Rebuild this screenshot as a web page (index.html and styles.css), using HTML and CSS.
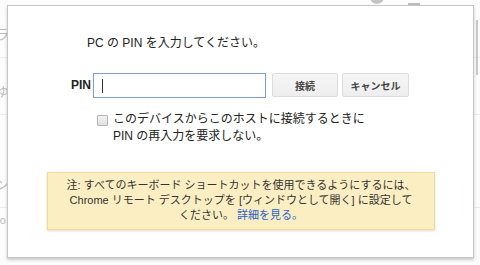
FILE: index.html
```html
<!DOCTYPE html>
<html lang="ja">
<head>
<meta charset="utf-8">
<link rel="stylesheet" href="styles.css">
</head>
<body>
<div class="page">
  <div class="bg">
    <div class="bg-row bg-r1">ラ</div>
    <div class="bg-row bg-r2">ゆ</div>
    <div class="bg-row bg-r3">ン</div>
    <div class="bg-row bg-r4">ro</div>
  </div>
  <span class="bg-dot"></span>
  <span class="bg-dash"></span>
  <span class="bg-scroll"></span>

  <div class="dialog">
    <div class="title">PC の PIN を入力してください。</div>
    <div class="pin-row">
      <span class="pin-label">PIN</span>
      <div class="pin-input"><span class="caret"></span></div>
      <button class="btn btn-connect">接続</button>
      <button class="btn btn-cancel">キャンセル</button>
    </div>
    <div class="check-row">
      <span class="checkbox"></span>
      <div class="check-text">このデバイスからこのホストに接続するときに<br>PIN の再入力を要求しない。</div>
    </div>
    <div class="note">注: すべてのキーボード ショートカットを使用できるようにするには、<br>Chrome リモート デスクトップを [ウィンドウとして開く] に設定して<br>ください。 <a class="note-link" href="#">詳細を見る。</a></div>
  </div>
</div>
</body>
</html>
```
FILE: styles.css
```css
html, body {
  margin: 0;
  padding: 0;
  background: #ffffff;
}
body {
  font-family: "Liberation Sans", "Noto Sans CJK JP", sans-serif;
  color: #222;
}
.page {
  position: relative;
  width: 480px;
  height: 265px;
  overflow: hidden;
  background: #fcfcfc;
}
.bg {
  display: flex;
  flex-direction: column;
}
.bg-row {
  font-size: 13px;
  color: #bdbdbd;
  height: 44px;
  line-height: 44px;
  border-bottom: 1px solid #ededed;
  text-indent: -4px;
}
.bg-r1 { margin-top: 13px; }
.bg-r2 { margin-top: 12px; }
.bg-r3 { margin-top: 48px; }
.bg-r4 { margin-top: -10px; font-size: 11px; border-bottom: none; }
.bg-dot {
  position: absolute;
  left: 370px;
  top: -10px;
  width: 14px;
  height: 14px;
  border-radius: 50%;
  background: #c4c4c4;
}
.bg-dash {
  position: absolute;
  left: 408px;
  top: 3px;
  width: 12px;
  height: 2px;
  background: #bbb;
}
.bg-scroll {
  position: absolute;
  left: 476px;
  top: 20px;
  width: 2px;
  height: 55px;
  background: #c8c8c8;
}
.dialog {
  position: absolute;
  left: 7px;
  top: 5px;
  width: 467px;
  height: 253px;
  box-sizing: border-box;
  background: #fff;
  border: 1px solid #c6c6c6;
  box-shadow: 0 2px 3px rgba(0, 0, 0, 0.2);
  padding-top: 29px;
}
.title {
  margin-left: 79px;
  font-size: 12px;
  line-height: 16px;
  color: #222;
}
.pin-row {
  display: flex;
  align-items: flex-start;
  margin-top: 22px;
  padding-left: 63px;
}
.pin-label {
  font-weight: bold;
  font-size: 12px;
  line-height: 25px;
  color: #222;
  margin-right: 2px;
}
.pin-input {
  width: 173px;
  height: 25px;
  box-sizing: border-box;
  border: 1px solid #7f9fd6;
  background: #fff;
  display: flex;
  align-items: center;
  padding-left: 8px;
}
.caret {
  display: block;
  width: 1px;
  height: 14px;
  background: #333;
}
.btn {
  height: 24px;
  box-sizing: border-box;
  border: 1px solid #dcdcdc;
  border-radius: 2px;
  background: linear-gradient(#f6f6f6, #eeeeee);
  font-family: "Liberation Sans", "Noto Sans CJK JP", sans-serif;
  font-weight: bold;
  font-size: 10px;
  color: #444;
  padding: 0;
  margin: 0;
}
.btn-connect {
  width: 66px;
  margin-left: 6px;
}
.btn-cancel {
  width: 67px;
  margin-left: 4px;
}
.check-row {
  display: flex;
  align-items: flex-start;
  margin-top: 13px;
  padding-left: 89px;
}
.checkbox {
  width: 9px;
  height: 9px;
  margin-top: 4px;
  border: 1px solid #b5b5b5;
  border-radius: 1px;
  background: linear-gradient(#f2f2f2, #e2e2e2);
  margin-right: 5px;
  flex: none;
}
.check-text {
  font-size: 12px;
  line-height: 17px;
  color: #222;
}
.note {
  margin-top: 27px;
  margin-left: 39px;
  width: 388px;
  height: 58px;
  box-sizing: border-box;
  padding-top: 5px;
  background: #fbeec3;
  border: 1px solid #efdc9c;
  box-shadow: 0 1px 2px rgba(180, 150, 60, 0.35);
  text-align: center;
  font-size: 11px;
  line-height: 15px;
  color: #333;
}
.note-link {
  color: #2a62c9;
  text-decoration: none;
}
```
